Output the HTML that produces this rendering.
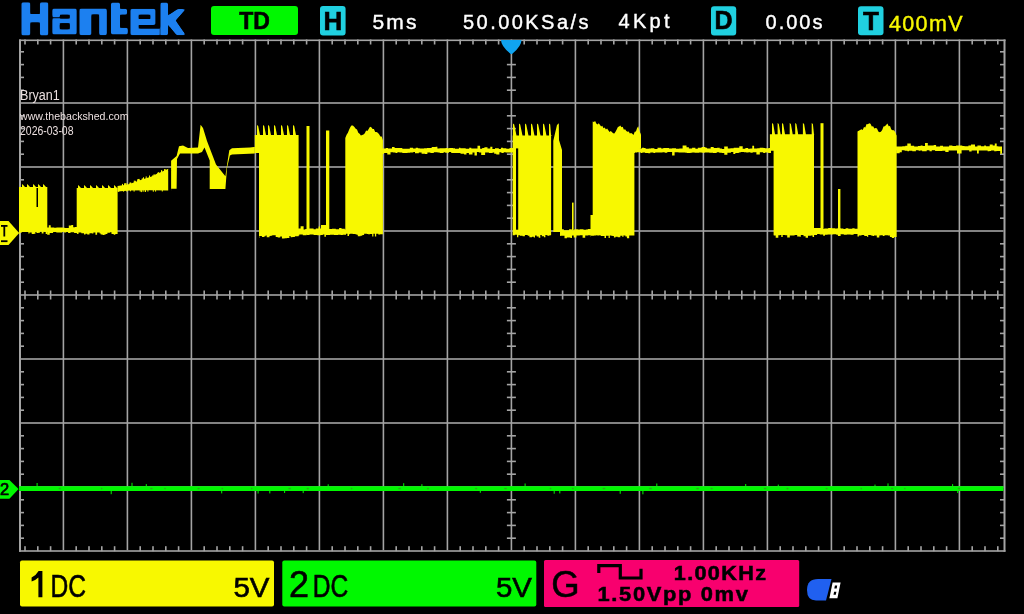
<!DOCTYPE html><html><head><meta charset="utf-8"><style>html,body{margin:0;padding:0;background:#000;width:1024px;height:614px;overflow:hidden}svg{display:block;filter:blur(0.4px)}text{font-family:"Liberation Sans",sans-serif}</style></head><body>
<svg width="1024" height="614" viewBox="0 0 1024 614">
<rect width="1024" height="614" fill="#000"/>
<defs><filter id="rnd" x="-5%" y="-20%" width="110%" height="140%"><feGaussianBlur in="SourceAlpha" stdDeviation="1.1"/><feComponentTransfer><feFuncA type="linear" slope="3" intercept="-1"/></feComponentTransfer><feComposite in="SourceGraphic" operator="in"/></filter></defs>
<g fill="#1e80f0" fill-rule="evenodd" filter="url(#rnd)">
<path d="M21.3,2.3H30.4V14.1H39.8V2.3H48.4V35.5H39.8V22.6H30.4V35.5H21.3Z"/>
<path d="M52.2,8.5H76.8V34.6H52.2V18.2H60V18.6H69.7V14.8H60V17.2H52.2Z M59.8,23.2H69.7V29.3H59.8Z"/>
<path d="M79.3,8.5H106.9V35.3H99.1V14.6H91.5V35.3H79.3Z"/>
<path d="M110.9,2.5H120.1V8.7H127.2V14.8H120.1V27.8H127.9V34.6H110.9Z"/>
<path d="M130.3,8.7H155.6V24.9H138.7V28.4H159.8V35.3H130.3Z M138.7,14.8H150.3V19H138.7Z"/>
<path d="M160.3,2.5H168.1V15.3L177.5,9H186L175.8,20.5L186,35.3H176.5L168.1,24.9V35.3H160.3Z"/>
</g>
<rect x="211" y="6" width="87" height="29" rx="3" fill="#00f800"/>
<text x="254.5" y="29" font-size="23" font-weight="bold" text-anchor="middle" fill="#000" stroke="#000" stroke-width="0.6">TD</text>
<rect x="320" y="6" width="25.6" height="29.6" rx="3" fill="#20d0e0"/>
<text x="332.8" y="30.1" font-size="26" font-weight="bold" text-anchor="middle" fill="#000" stroke="#000" stroke-width="0.6">H</text>
<rect x="711" y="6.2" width="25.2" height="29.3" rx="3" fill="#20d0e0"/>
<text x="723.6" y="29.4" font-size="25" font-weight="bold" text-anchor="middle" fill="#000" stroke="#000" stroke-width="0.6">D</text>
<rect x="858" y="6.2" width="25.5" height="29.1" rx="3" fill="#20d0e0"/>
<text x="871" y="30.1" font-size="26" font-weight="bold" text-anchor="middle" fill="#000" stroke="#000" stroke-width="0.6">T</text>
<text x="372.5" y="28.9" font-size="21" font-weight="normal" fill="#fff" textLength="44" lengthAdjust="spacing" stroke="#fff" stroke-width="0.4" >5ms</text>
<text x="463" y="28.9" font-size="20" font-weight="normal" fill="#fff" textLength="125.5" lengthAdjust="spacing" stroke="#fff" stroke-width="0.4" >50.00KSa/s</text>
<text x="618.5" y="27.5" font-size="20" font-weight="normal" fill="#fff" textLength="51" lengthAdjust="spacing" stroke="#fff" stroke-width="0.4" >4Kpt</text>
<text x="765.5" y="28.7" font-size="20" font-weight="normal" fill="#fff" textLength="57" lengthAdjust="spacing" stroke="#fff" stroke-width="0.4" >0.00s</text>
<text x="889" y="31.4" font-size="21.5" font-weight="normal" fill="#f8f800" textLength="73.5" lengthAdjust="spacing" stroke="#f8f800" stroke-width="0.4" >400mV</text>
<g fill="#a4a4a4"><rect x="62.6" y="39.5" width="1.6" height="510.7"/><rect x="126.6" y="39.5" width="1.6" height="510.7"/><rect x="190.6" y="39.5" width="1.6" height="510.7"/><rect x="254.6" y="39.5" width="1.6" height="510.7"/><rect x="318.6" y="39.5" width="1.6" height="510.7"/><rect x="382.6" y="39.5" width="1.6" height="510.7"/><rect x="446.6" y="39.5" width="1.6" height="510.7"/><rect x="510.6" y="39.5" width="1.6" height="510.7"/><rect x="574.6" y="39.5" width="1.6" height="510.7"/><rect x="638.6" y="39.5" width="1.6" height="510.7"/><rect x="702.6" y="39.5" width="1.6" height="510.7"/><rect x="766.6" y="39.5" width="1.6" height="510.7"/><rect x="830.6" y="39.5" width="1.6" height="510.7"/><rect x="894.6" y="39.5" width="1.6" height="510.7"/><rect x="958.6" y="39.5" width="1.6" height="510.7"/><rect x="19.0" y="102.2" width="984.5" height="1.6"/><rect x="19.0" y="166.2" width="984.5" height="1.6"/><rect x="19.0" y="230.2" width="984.5" height="1.6"/><rect x="19.0" y="294.2" width="984.5" height="1.6"/><rect x="19.0" y="358.2" width="984.5" height="1.6"/><rect x="19.0" y="422.2" width="984.5" height="1.6"/><rect x="19.0" y="486.2" width="984.5" height="1.6"/><rect x="19.0" y="39.5" width="2.0" height="512.2"/><rect x="1003.5" y="39.5" width="2.0" height="512.2"/><rect x="19.0" y="39.5" width="986.5" height="1.6"/><rect x="19.0" y="550.2" width="986.5" height="1.6"/><rect x="24.2" y="39.5" width="1.6" height="5.0"/><rect x="24.2" y="546.2" width="1.6" height="5.0"/><rect x="24.2" y="290.5" width="1.6" height="9.0"/><rect x="37.0" y="39.5" width="1.6" height="5.0"/><rect x="37.0" y="546.2" width="1.6" height="5.0"/><rect x="37.0" y="290.5" width="1.6" height="9.0"/><rect x="49.8" y="39.5" width="1.6" height="5.0"/><rect x="49.8" y="546.2" width="1.6" height="5.0"/><rect x="49.8" y="290.5" width="1.6" height="9.0"/><rect x="75.4" y="39.5" width="1.6" height="5.0"/><rect x="75.4" y="546.2" width="1.6" height="5.0"/><rect x="75.4" y="290.5" width="1.6" height="9.0"/><rect x="88.2" y="39.5" width="1.6" height="5.0"/><rect x="88.2" y="546.2" width="1.6" height="5.0"/><rect x="88.2" y="290.5" width="1.6" height="9.0"/><rect x="101.0" y="39.5" width="1.6" height="5.0"/><rect x="101.0" y="546.2" width="1.6" height="5.0"/><rect x="101.0" y="290.5" width="1.6" height="9.0"/><rect x="113.8" y="39.5" width="1.6" height="5.0"/><rect x="113.8" y="546.2" width="1.6" height="5.0"/><rect x="113.8" y="290.5" width="1.6" height="9.0"/><rect x="139.4" y="39.5" width="1.6" height="5.0"/><rect x="139.4" y="546.2" width="1.6" height="5.0"/><rect x="139.4" y="290.5" width="1.6" height="9.0"/><rect x="152.2" y="39.5" width="1.6" height="5.0"/><rect x="152.2" y="546.2" width="1.6" height="5.0"/><rect x="152.2" y="290.5" width="1.6" height="9.0"/><rect x="165.0" y="39.5" width="1.6" height="5.0"/><rect x="165.0" y="546.2" width="1.6" height="5.0"/><rect x="165.0" y="290.5" width="1.6" height="9.0"/><rect x="177.8" y="39.5" width="1.6" height="5.0"/><rect x="177.8" y="546.2" width="1.6" height="5.0"/><rect x="177.8" y="290.5" width="1.6" height="9.0"/><rect x="203.4" y="39.5" width="1.6" height="5.0"/><rect x="203.4" y="546.2" width="1.6" height="5.0"/><rect x="203.4" y="290.5" width="1.6" height="9.0"/><rect x="216.2" y="39.5" width="1.6" height="5.0"/><rect x="216.2" y="546.2" width="1.6" height="5.0"/><rect x="216.2" y="290.5" width="1.6" height="9.0"/><rect x="229.0" y="39.5" width="1.6" height="5.0"/><rect x="229.0" y="546.2" width="1.6" height="5.0"/><rect x="229.0" y="290.5" width="1.6" height="9.0"/><rect x="241.8" y="39.5" width="1.6" height="5.0"/><rect x="241.8" y="546.2" width="1.6" height="5.0"/><rect x="241.8" y="290.5" width="1.6" height="9.0"/><rect x="267.4" y="39.5" width="1.6" height="5.0"/><rect x="267.4" y="546.2" width="1.6" height="5.0"/><rect x="267.4" y="290.5" width="1.6" height="9.0"/><rect x="280.2" y="39.5" width="1.6" height="5.0"/><rect x="280.2" y="546.2" width="1.6" height="5.0"/><rect x="280.2" y="290.5" width="1.6" height="9.0"/><rect x="293.0" y="39.5" width="1.6" height="5.0"/><rect x="293.0" y="546.2" width="1.6" height="5.0"/><rect x="293.0" y="290.5" width="1.6" height="9.0"/><rect x="305.8" y="39.5" width="1.6" height="5.0"/><rect x="305.8" y="546.2" width="1.6" height="5.0"/><rect x="305.8" y="290.5" width="1.6" height="9.0"/><rect x="331.4" y="39.5" width="1.6" height="5.0"/><rect x="331.4" y="546.2" width="1.6" height="5.0"/><rect x="331.4" y="290.5" width="1.6" height="9.0"/><rect x="344.2" y="39.5" width="1.6" height="5.0"/><rect x="344.2" y="546.2" width="1.6" height="5.0"/><rect x="344.2" y="290.5" width="1.6" height="9.0"/><rect x="357.0" y="39.5" width="1.6" height="5.0"/><rect x="357.0" y="546.2" width="1.6" height="5.0"/><rect x="357.0" y="290.5" width="1.6" height="9.0"/><rect x="369.8" y="39.5" width="1.6" height="5.0"/><rect x="369.8" y="546.2" width="1.6" height="5.0"/><rect x="369.8" y="290.5" width="1.6" height="9.0"/><rect x="395.4" y="39.5" width="1.6" height="5.0"/><rect x="395.4" y="546.2" width="1.6" height="5.0"/><rect x="395.4" y="290.5" width="1.6" height="9.0"/><rect x="408.2" y="39.5" width="1.6" height="5.0"/><rect x="408.2" y="546.2" width="1.6" height="5.0"/><rect x="408.2" y="290.5" width="1.6" height="9.0"/><rect x="421.0" y="39.5" width="1.6" height="5.0"/><rect x="421.0" y="546.2" width="1.6" height="5.0"/><rect x="421.0" y="290.5" width="1.6" height="9.0"/><rect x="433.8" y="39.5" width="1.6" height="5.0"/><rect x="433.8" y="546.2" width="1.6" height="5.0"/><rect x="433.8" y="290.5" width="1.6" height="9.0"/><rect x="459.4" y="39.5" width="1.6" height="5.0"/><rect x="459.4" y="546.2" width="1.6" height="5.0"/><rect x="459.4" y="290.5" width="1.6" height="9.0"/><rect x="472.2" y="39.5" width="1.6" height="5.0"/><rect x="472.2" y="546.2" width="1.6" height="5.0"/><rect x="472.2" y="290.5" width="1.6" height="9.0"/><rect x="485.0" y="39.5" width="1.6" height="5.0"/><rect x="485.0" y="546.2" width="1.6" height="5.0"/><rect x="485.0" y="290.5" width="1.6" height="9.0"/><rect x="497.8" y="39.5" width="1.6" height="5.0"/><rect x="497.8" y="546.2" width="1.6" height="5.0"/><rect x="497.8" y="290.5" width="1.6" height="9.0"/><rect x="523.4" y="39.5" width="1.6" height="5.0"/><rect x="523.4" y="546.2" width="1.6" height="5.0"/><rect x="523.4" y="290.5" width="1.6" height="9.0"/><rect x="536.2" y="39.5" width="1.6" height="5.0"/><rect x="536.2" y="546.2" width="1.6" height="5.0"/><rect x="536.2" y="290.5" width="1.6" height="9.0"/><rect x="549.0" y="39.5" width="1.6" height="5.0"/><rect x="549.0" y="546.2" width="1.6" height="5.0"/><rect x="549.0" y="290.5" width="1.6" height="9.0"/><rect x="561.8" y="39.5" width="1.6" height="5.0"/><rect x="561.8" y="546.2" width="1.6" height="5.0"/><rect x="561.8" y="290.5" width="1.6" height="9.0"/><rect x="587.4" y="39.5" width="1.6" height="5.0"/><rect x="587.4" y="546.2" width="1.6" height="5.0"/><rect x="587.4" y="290.5" width="1.6" height="9.0"/><rect x="600.2" y="39.5" width="1.6" height="5.0"/><rect x="600.2" y="546.2" width="1.6" height="5.0"/><rect x="600.2" y="290.5" width="1.6" height="9.0"/><rect x="613.0" y="39.5" width="1.6" height="5.0"/><rect x="613.0" y="546.2" width="1.6" height="5.0"/><rect x="613.0" y="290.5" width="1.6" height="9.0"/><rect x="625.8" y="39.5" width="1.6" height="5.0"/><rect x="625.8" y="546.2" width="1.6" height="5.0"/><rect x="625.8" y="290.5" width="1.6" height="9.0"/><rect x="651.4" y="39.5" width="1.6" height="5.0"/><rect x="651.4" y="546.2" width="1.6" height="5.0"/><rect x="651.4" y="290.5" width="1.6" height="9.0"/><rect x="664.2" y="39.5" width="1.6" height="5.0"/><rect x="664.2" y="546.2" width="1.6" height="5.0"/><rect x="664.2" y="290.5" width="1.6" height="9.0"/><rect x="677.0" y="39.5" width="1.6" height="5.0"/><rect x="677.0" y="546.2" width="1.6" height="5.0"/><rect x="677.0" y="290.5" width="1.6" height="9.0"/><rect x="689.8" y="39.5" width="1.6" height="5.0"/><rect x="689.8" y="546.2" width="1.6" height="5.0"/><rect x="689.8" y="290.5" width="1.6" height="9.0"/><rect x="715.4" y="39.5" width="1.6" height="5.0"/><rect x="715.4" y="546.2" width="1.6" height="5.0"/><rect x="715.4" y="290.5" width="1.6" height="9.0"/><rect x="728.2" y="39.5" width="1.6" height="5.0"/><rect x="728.2" y="546.2" width="1.6" height="5.0"/><rect x="728.2" y="290.5" width="1.6" height="9.0"/><rect x="741.0" y="39.5" width="1.6" height="5.0"/><rect x="741.0" y="546.2" width="1.6" height="5.0"/><rect x="741.0" y="290.5" width="1.6" height="9.0"/><rect x="753.8" y="39.5" width="1.6" height="5.0"/><rect x="753.8" y="546.2" width="1.6" height="5.0"/><rect x="753.8" y="290.5" width="1.6" height="9.0"/><rect x="779.4" y="39.5" width="1.6" height="5.0"/><rect x="779.4" y="546.2" width="1.6" height="5.0"/><rect x="779.4" y="290.5" width="1.6" height="9.0"/><rect x="792.2" y="39.5" width="1.6" height="5.0"/><rect x="792.2" y="546.2" width="1.6" height="5.0"/><rect x="792.2" y="290.5" width="1.6" height="9.0"/><rect x="805.0" y="39.5" width="1.6" height="5.0"/><rect x="805.0" y="546.2" width="1.6" height="5.0"/><rect x="805.0" y="290.5" width="1.6" height="9.0"/><rect x="817.8" y="39.5" width="1.6" height="5.0"/><rect x="817.8" y="546.2" width="1.6" height="5.0"/><rect x="817.8" y="290.5" width="1.6" height="9.0"/><rect x="843.4" y="39.5" width="1.6" height="5.0"/><rect x="843.4" y="546.2" width="1.6" height="5.0"/><rect x="843.4" y="290.5" width="1.6" height="9.0"/><rect x="856.2" y="39.5" width="1.6" height="5.0"/><rect x="856.2" y="546.2" width="1.6" height="5.0"/><rect x="856.2" y="290.5" width="1.6" height="9.0"/><rect x="869.0" y="39.5" width="1.6" height="5.0"/><rect x="869.0" y="546.2" width="1.6" height="5.0"/><rect x="869.0" y="290.5" width="1.6" height="9.0"/><rect x="881.8" y="39.5" width="1.6" height="5.0"/><rect x="881.8" y="546.2" width="1.6" height="5.0"/><rect x="881.8" y="290.5" width="1.6" height="9.0"/><rect x="907.4" y="39.5" width="1.6" height="5.0"/><rect x="907.4" y="546.2" width="1.6" height="5.0"/><rect x="907.4" y="290.5" width="1.6" height="9.0"/><rect x="920.2" y="39.5" width="1.6" height="5.0"/><rect x="920.2" y="546.2" width="1.6" height="5.0"/><rect x="920.2" y="290.5" width="1.6" height="9.0"/><rect x="933.0" y="39.5" width="1.6" height="5.0"/><rect x="933.0" y="546.2" width="1.6" height="5.0"/><rect x="933.0" y="290.5" width="1.6" height="9.0"/><rect x="945.8" y="39.5" width="1.6" height="5.0"/><rect x="945.8" y="546.2" width="1.6" height="5.0"/><rect x="945.8" y="290.5" width="1.6" height="9.0"/><rect x="971.4" y="39.5" width="1.6" height="5.0"/><rect x="971.4" y="546.2" width="1.6" height="5.0"/><rect x="971.4" y="290.5" width="1.6" height="9.0"/><rect x="984.2" y="39.5" width="1.6" height="5.0"/><rect x="984.2" y="546.2" width="1.6" height="5.0"/><rect x="984.2" y="290.5" width="1.6" height="9.0"/><rect x="997.0" y="39.5" width="1.6" height="5.0"/><rect x="997.0" y="546.2" width="1.6" height="5.0"/><rect x="997.0" y="290.5" width="1.6" height="9.0"/><rect x="19.0" y="51.0" width="5.0" height="1.6"/><rect x="1000.0" y="51.0" width="5.0" height="1.6"/><rect x="19.0" y="63.8" width="5.0" height="1.6"/><rect x="1000.0" y="63.8" width="5.0" height="1.6"/><rect x="506.9" y="63.8" width="9.0" height="1.6"/><rect x="19.0" y="76.6" width="5.0" height="1.6"/><rect x="1000.0" y="76.6" width="5.0" height="1.6"/><rect x="506.9" y="76.6" width="9.0" height="1.6"/><rect x="19.0" y="89.4" width="5.0" height="1.6"/><rect x="1000.0" y="89.4" width="5.0" height="1.6"/><rect x="506.9" y="89.4" width="9.0" height="1.6"/><rect x="19.0" y="115.0" width="5.0" height="1.6"/><rect x="1000.0" y="115.0" width="5.0" height="1.6"/><rect x="506.9" y="115.0" width="9.0" height="1.6"/><rect x="19.0" y="127.8" width="5.0" height="1.6"/><rect x="1000.0" y="127.8" width="5.0" height="1.6"/><rect x="506.9" y="127.8" width="9.0" height="1.6"/><rect x="19.0" y="140.6" width="5.0" height="1.6"/><rect x="1000.0" y="140.6" width="5.0" height="1.6"/><rect x="506.9" y="140.6" width="9.0" height="1.6"/><rect x="19.0" y="153.4" width="5.0" height="1.6"/><rect x="1000.0" y="153.4" width="5.0" height="1.6"/><rect x="506.9" y="153.4" width="9.0" height="1.6"/><rect x="19.0" y="179.0" width="5.0" height="1.6"/><rect x="1000.0" y="179.0" width="5.0" height="1.6"/><rect x="506.9" y="179.0" width="9.0" height="1.6"/><rect x="19.0" y="191.8" width="5.0" height="1.6"/><rect x="1000.0" y="191.8" width="5.0" height="1.6"/><rect x="506.9" y="191.8" width="9.0" height="1.6"/><rect x="19.0" y="204.6" width="5.0" height="1.6"/><rect x="1000.0" y="204.6" width="5.0" height="1.6"/><rect x="506.9" y="204.6" width="9.0" height="1.6"/><rect x="19.0" y="217.4" width="5.0" height="1.6"/><rect x="1000.0" y="217.4" width="5.0" height="1.6"/><rect x="506.9" y="217.4" width="9.0" height="1.6"/><rect x="19.0" y="243.0" width="5.0" height="1.6"/><rect x="1000.0" y="243.0" width="5.0" height="1.6"/><rect x="506.9" y="243.0" width="9.0" height="1.6"/><rect x="19.0" y="255.8" width="5.0" height="1.6"/><rect x="1000.0" y="255.8" width="5.0" height="1.6"/><rect x="506.9" y="255.8" width="9.0" height="1.6"/><rect x="19.0" y="268.6" width="5.0" height="1.6"/><rect x="1000.0" y="268.6" width="5.0" height="1.6"/><rect x="506.9" y="268.6" width="9.0" height="1.6"/><rect x="19.0" y="281.4" width="5.0" height="1.6"/><rect x="1000.0" y="281.4" width="5.0" height="1.6"/><rect x="506.9" y="281.4" width="9.0" height="1.6"/><rect x="19.0" y="307.0" width="5.0" height="1.6"/><rect x="1000.0" y="307.0" width="5.0" height="1.6"/><rect x="506.9" y="307.0" width="9.0" height="1.6"/><rect x="19.0" y="319.8" width="5.0" height="1.6"/><rect x="1000.0" y="319.8" width="5.0" height="1.6"/><rect x="506.9" y="319.8" width="9.0" height="1.6"/><rect x="19.0" y="332.6" width="5.0" height="1.6"/><rect x="1000.0" y="332.6" width="5.0" height="1.6"/><rect x="506.9" y="332.6" width="9.0" height="1.6"/><rect x="19.0" y="345.4" width="5.0" height="1.6"/><rect x="1000.0" y="345.4" width="5.0" height="1.6"/><rect x="506.9" y="345.4" width="9.0" height="1.6"/><rect x="19.0" y="371.0" width="5.0" height="1.6"/><rect x="1000.0" y="371.0" width="5.0" height="1.6"/><rect x="506.9" y="371.0" width="9.0" height="1.6"/><rect x="19.0" y="383.8" width="5.0" height="1.6"/><rect x="1000.0" y="383.8" width="5.0" height="1.6"/><rect x="506.9" y="383.8" width="9.0" height="1.6"/><rect x="19.0" y="396.6" width="5.0" height="1.6"/><rect x="1000.0" y="396.6" width="5.0" height="1.6"/><rect x="506.9" y="396.6" width="9.0" height="1.6"/><rect x="19.0" y="409.4" width="5.0" height="1.6"/><rect x="1000.0" y="409.4" width="5.0" height="1.6"/><rect x="506.9" y="409.4" width="9.0" height="1.6"/><rect x="19.0" y="435.0" width="5.0" height="1.6"/><rect x="1000.0" y="435.0" width="5.0" height="1.6"/><rect x="506.9" y="435.0" width="9.0" height="1.6"/><rect x="19.0" y="447.8" width="5.0" height="1.6"/><rect x="1000.0" y="447.8" width="5.0" height="1.6"/><rect x="506.9" y="447.8" width="9.0" height="1.6"/><rect x="19.0" y="460.6" width="5.0" height="1.6"/><rect x="1000.0" y="460.6" width="5.0" height="1.6"/><rect x="506.9" y="460.6" width="9.0" height="1.6"/><rect x="19.0" y="473.4" width="5.0" height="1.6"/><rect x="1000.0" y="473.4" width="5.0" height="1.6"/><rect x="506.9" y="473.4" width="9.0" height="1.6"/><rect x="19.0" y="499.0" width="5.0" height="1.6"/><rect x="1000.0" y="499.0" width="5.0" height="1.6"/><rect x="506.9" y="499.0" width="9.0" height="1.6"/><rect x="19.0" y="511.8" width="5.0" height="1.6"/><rect x="1000.0" y="511.8" width="5.0" height="1.6"/><rect x="506.9" y="511.8" width="9.0" height="1.6"/><rect x="19.0" y="524.6" width="5.0" height="1.6"/><rect x="1000.0" y="524.6" width="5.0" height="1.6"/><rect x="506.9" y="524.6" width="9.0" height="1.6"/><rect x="19.0" y="537.4" width="5.0" height="1.6"/><rect x="1000.0" y="537.4" width="5.0" height="1.6"/><rect x="506.9" y="537.4" width="9.0" height="1.6"/></g>
<text x="20" y="99.9" font-size="13.8" fill="#ece0e0" textLength="39.8" lengthAdjust="spacingAndGlyphs">Bryan1</text>
<text x="20" y="119.6" font-size="11" fill="#ece0e0" textLength="108.5" lengthAdjust="spacingAndGlyphs">www.thebackshed.com</text>
<text x="20" y="134.8" font-size="12" fill="#ece0e0" textLength="53.5" lengthAdjust="spacingAndGlyphs">2026-03-08</text>
<g fill="#f8f800"><polygon points="19.0,187.0 22.0,187.0 22.0,184.0 23.2,185.0 25.0,187.0 27.0,187.0 27.0,184.0 28.2,185.0 30.0,187.0 33.0,187.0 33.0,184.0 34.2,185.0 36.0,187.0 38.0,187.0 38.0,184.0 39.2,185.0 41.0,187.0 43.0,187.0 43.0,184.0 44.2,185.0 46.0,187.0 47.3,187.0 47.3,187.0 47.3,232.0 47.3,234.1 45.7,234.1 45.7,232.1 44.6,232.1 44.6,231.7 43.5,231.7 43.5,233.4 41.7,233.4 41.7,231.8 39.9,231.8 39.9,232.8 38.5,232.8 38.5,232.9 36.5,232.9 36.5,232.0 35.4,232.0 35.4,233.7 34.2,233.7 34.2,234.0 31.7,234.0 31.7,232.4 29.5,232.4 29.5,233.5 28.4,233.5 28.4,232.1 26.2,232.1 26.2,232.1 24.1,232.1 24.1,232.0 21.7,232.0 21.7,232.8 19.7,232.8 19.7,234.5 19.0,234.5"/><rect x="36.5" y="188" width="1.5" height="19" fill="#000"/><polygon points="47.0,227.4 48.8,227.4 48.8,225.2 50.7,225.2 50.7,227.6 54.1,227.6 54.1,227.7 56.4,227.7 56.4,227.4 59.3,227.4 59.3,227.5 63.2,227.5 63.2,227.7 64.8,227.7 64.8,227.9 68.8,227.9 68.8,225.6 71.3,225.6 71.3,225.0 73.2,225.0 73.2,227.2 75.0,227.2 75.0,227.0 77.0,227.0 77.0,233.0 74.1,233.0 74.1,232.2 70.5,232.2 70.5,233.0 68.1,233.0 68.1,232.1 66.2,232.1 66.2,232.5 64.1,232.5 64.1,231.9 62.0,231.9 62.0,232.6 59.5,232.6 59.5,232.5 56.3,232.5 56.3,232.0 53.1,232.0 53.1,232.9 49.7,232.9 49.7,234.8 47.2,234.8 47.2,232.0 47.0,232.0"/><polygon points="76.7,188.0 78.0,188.0 78.0,185.0 79.2,186.0 81.0,188.0 84.0,188.0 84.0,185.0 85.2,186.0 87.0,188.0 90.0,188.0 90.0,185.0 91.2,186.0 93.0,188.0 96.0,188.0 96.0,185.0 97.2,186.0 99.0,188.0 102.0,188.0 102.0,185.0 103.2,186.0 105.0,188.0 108.0,188.0 108.0,185.0 109.2,186.0 111.0,188.0 114.0,188.0 114.0,185.0 115.2,186.0 117.0,188.0 117.6,188.0 117.6,188.0 117.6,233.0 117.6,233.9 116.3,233.9 116.3,233.9 115.3,233.9 115.3,234.8 113.7,234.8 113.7,234.1 111.5,234.1 111.5,232.3 109.9,232.3 109.9,232.8 107.4,232.8 107.4,233.9 105.5,233.9 105.5,234.8 103.9,234.8 103.9,234.9 102.6,234.9 102.6,234.5 100.7,234.5 100.7,233.4 99.6,233.4 99.6,232.5 97.1,232.5 97.1,234.7 95.4,234.7 95.4,232.6 93.4,232.6 93.4,233.4 92.0,233.4 92.0,233.2 89.5,233.2 89.5,234.4 87.2,234.4 87.2,233.8 85.5,233.8 85.5,234.6 84.0,234.6 84.0,233.3 81.3,233.3 81.3,232.6 78.5,232.6 78.5,234.0 77.1,234.0 77.1,233.3 76.7,233.3"/><polygon points="117.5,186.0 127.7,184.6 135.2,181.9 142.0,179.5 151.6,176.4 156.4,174.0 161.2,172.0 166.7,169.6 168.2,168.8 168.2,171.0 171.1,171.0 171.1,160.8 176.6,156.0 179.0,146.3 183.0,145.5 188.0,148.0 198.0,147.5 200.6,124.8 203.0,128.0 207.0,141.0 216.0,164.5 225.4,176.2 227.0,165.0 229.3,150.2 232.0,148.2 250.0,147.5 254.0,147.0 254.8,147.0 254.8,153.5 232.0,154.5 229.9,155.4 227.0,168.0 225.4,189.0 209.7,189.0 209.7,160.6 204.5,147.6 202.0,152.0 198.0,153.5 180.0,153.5 177.0,158.9 176.6,188.7 171.1,188.7 171.1,190.5 167.4,190.5 150.0,190.3 130.0,190.6 117.5,191.4"/><rect x="157.9" y="172.1" width="1" height="5"/><rect x="149.0" y="175.5" width="1" height="5"/><rect x="122.0" y="183.9" width="1" height="5"/><rect x="161.2" y="170.3" width="1" height="5"/><rect x="153.6" y="174.2" width="1" height="5"/><rect x="126.5" y="183.1" width="1" height="5"/><rect x="133.8" y="180.7" width="1" height="5"/><rect x="164.2" y="169.6" width="1" height="5"/><rect x="137.1" y="179.3" width="1" height="5"/><rect x="152.4" y="175.2" width="1" height="5"/><rect x="124.0" y="184.4" width="1" height="5"/><rect x="161.0" y="170.4" width="1" height="5"/><rect x="124.9" y="183.2" width="1" height="5"/><rect x="164.6" y="169.0" width="1" height="5"/><rect x="134.6" y="180.8" width="1" height="5"/><rect x="124.2" y="184.6" width="1" height="5"/><rect x="164.1" y="169.3" width="1" height="5"/><rect x="143.0" y="177.3" width="1" height="5"/><rect x="138.6" y="178.9" width="1" height="5"/><rect x="157.2" y="172.8" width="1" height="5"/><rect x="130.0" y="182.8" width="1" height="5"/><rect x="129.4" y="182.6" width="1" height="5"/><rect x="130.3" y="182.5" width="1" height="5"/><rect x="124.2" y="183.2" width="1" height="5"/><rect x="134.8" y="180.9" width="1" height="5"/><rect x="145.7" y="176.4" width="1" height="5"/><rect x="138.0" y="179.0" width="1" height="5"/><rect x="141.8" y="178.3" width="1" height="5"/><rect x="142.9" y="178.7" width="1" height="5"/><rect x="138.9" y="179.8" width="1" height="5"/><rect x="118.2" y="189" width="1" height="3.0"/><rect x="126.3" y="189" width="1" height="2.6"/><rect x="152.8" y="189" width="1" height="2.7"/><rect x="133.6" y="189" width="1" height="2.6"/><rect x="144.7" y="189" width="1" height="2.9"/><rect x="123.1" y="189" width="1" height="2.7"/><rect x="129.9" y="189" width="1" height="2.3"/><rect x="155.1" y="189" width="1" height="2.6"/><rect x="145.0" y="189" width="1" height="2.9"/><rect x="161.8" y="189" width="1" height="2.5"/><rect x="147.4" y="189" width="1" height="2.6"/><rect x="142.6" y="189" width="1" height="2.8"/><rect x="139.7" y="189" width="1" height="2.6"/><rect x="140.9" y="189" width="1" height="3.1"/><rect x="168.2" y="170.4" width="2.9" height="22" fill="#000"/><polygon points="254.8,135.0 254.8,135.0 257.0,135.0 257.0,125.0 258.2,126.0 260.0,135.0 263.0,135.0 263.0,125.0 264.2,126.0 266.0,135.0 268.0,135.0 268.0,125.0 269.2,126.0 271.0,135.0 274.0,135.0 274.0,125.0 275.2,126.0 277.0,135.0 281.0,135.0 281.0,125.0 282.2,126.0 284.0,135.0 287.0,135.0 287.0,125.0 288.2,126.0 290.0,135.0 293.0,135.0 293.0,125.0 294.2,126.0 296.0,135.0 298.6,135.0 298.6,135.0 298.6,235.5 298.6,236.3 296.3,236.3 296.3,236.3 294.9,236.3 294.9,237.0 292.4,237.0 292.4,237.2 290.6,237.2 290.6,236.1 289.4,236.1 289.4,238.0 286.8,238.0 286.8,238.3 284.6,238.3 284.6,238.4 281.9,238.4 281.9,236.4 280.2,236.4 280.2,237.5 277.7,237.5 277.7,237.1 275.7,237.1 275.7,235.2 274.2,235.2 274.2,235.2 272.2,235.2 272.2,235.8 270.6,235.8 270.6,236.1 269.5,236.1 269.5,237.3 266.7,237.3 266.7,235.5 265.6,235.5 265.6,236.3 264.4,236.3 264.4,237.1 261.9,237.1 261.9,236.0 259.3,236.0 259.3,238.0 259.0,238.0 259.0,236.0 259.0,153.0 254.8,153.0"/><polygon points="298.0,228.5 300.6,228.5 300.6,226.3 303.6,226.3 303.6,229.4 305.3,229.4 305.3,229.1 307.7,229.1 307.7,228.6 309.8,228.6 309.8,228.5 311.9,228.5 311.9,228.6 313.6,228.6 313.6,229.3 315.8,229.3 315.8,228.6 318.6,228.6 318.6,226.5 320.1,226.5 320.1,228.6 323.0,228.6 323.0,228.5 326.8,228.5 326.8,229.0 329.4,229.0 329.4,229.0 331.9,229.0 331.9,228.8 335.8,228.8 335.8,229.2 339.1,229.2 339.1,227.9 341.5,227.9 341.5,228.7 344.8,228.7 344.8,229.4 346.0,229.4 346.0,234.7 342.8,234.7 342.8,235.0 340.6,235.0 340.6,234.7 338.0,234.7 338.0,235.1 334.0,235.1 334.0,234.8 330.1,234.8 330.1,234.9 328.6,234.9 328.6,234.6 325.9,234.6 325.9,236.8 324.4,236.8 324.4,234.4 322.8,234.4 322.8,235.1 320.7,235.1 320.7,235.2 317.3,235.2 317.3,234.9 313.6,234.9 313.6,234.6 309.6,234.6 309.6,234.5 306.5,234.5 306.5,235.2 302.8,235.2 302.8,234.6 299.3,234.6 299.3,235.4 298.0,235.4"/><rect x="306.5" y="126" width="3" height="109"/><rect x="326" y="130.5" width="3.3" height="104.5"/><rect x="321" y="225" width="6" height="5"/><polygon points="345.3,138.1 346.6,134.7 347.9,132.8 349.2,129.5 350.5,126.8 351.8,125.2 353.1,125.8 354.4,127.1 355.7,128.7 357.0,129.5 358.3,132.8 359.6,133.7 360.9,135.4 362.2,135.0 363.5,134.5 364.8,133.3 366.1,130.6 367.4,130.9 368.7,129.1 370.0,126.8 371.3,127.3 372.6,129.0 373.9,129.0 375.2,132.0 376.5,132.0 377.8,132.7 379.1,134.3 380.4,136.6 381.7,136.4 383.0,140.8 382.9,140.0 382.9,234.5 382.9,234.2 380.1,234.2 380.1,234.6 378.3,234.6 378.3,233.8 376.2,233.8 376.2,236.6 374.9,236.6 374.9,233.7 373.4,233.7 373.4,236.4 372.2,236.4 372.2,234.0 370.0,234.0 370.0,234.3 368.1,234.3 368.1,233.9 366.9,233.9 366.9,233.7 364.1,233.7 364.1,234.9 362.3,234.9 362.3,235.7 360.5,235.7 360.5,236.3 357.8,236.3 357.8,234.8 356.5,234.8 356.5,234.3 355.3,234.3 355.3,234.0 352.7,234.0 352.7,233.7 350.1,233.7 350.1,234.2 349.0,234.2 349.0,235.9 347.5,235.9 347.5,233.7 345.9,233.7 345.9,233.8 345.3,233.8"/><polygon points="382.0,148.6 385.8,148.6 385.8,148.1 388.0,148.1 388.0,148.4 392.0,148.4 392.0,147.1 394.6,147.1 394.6,148.0 398.2,148.0 398.2,148.0 400.3,148.0 400.3,148.1 402.3,148.1 402.3,148.7 406.0,148.7 406.0,148.8 409.8,148.8 409.8,147.8 413.1,147.8 413.1,148.6 415.7,148.6 415.7,147.8 417.9,147.8 417.9,148.3 419.7,148.3 419.7,148.6 422.0,148.6 422.0,148.5 424.1,148.5 424.1,148.2 427.0,148.2 427.0,147.9 428.9,147.9 428.9,148.0 431.7,148.0 431.7,146.9 435.7,146.9 435.7,146.8 437.4,146.8 437.4,148.4 439.5,148.4 439.5,148.2 442.9,148.2 442.9,148.2 445.7,148.2 445.7,148.0 447.4,148.0 447.4,148.3 449.2,148.3 449.2,148.0 452.9,148.0 452.9,148.2 455.0,148.2 455.0,148.7 458.9,148.7 458.9,147.7 460.4,147.7 460.4,148.3 464.2,148.3 464.2,148.2 465.7,148.2 465.7,148.7 469.2,148.7 469.2,147.8 471.3,147.8 471.3,148.5 474.1,148.5 474.1,148.5 477.5,148.5 477.5,145.7 480.1,145.7 480.1,148.8 482.2,148.8 482.2,147.9 484.4,147.9 484.4,147.2 487.5,147.2 487.5,148.4 490.3,148.4 490.3,146.7 492.4,146.7 492.4,148.9 495.0,148.9 495.0,148.3 498.8,148.3 498.8,148.9 500.9,148.9 500.9,147.7 503.1,147.7 503.1,148.2 506.3,148.2 506.3,148.8 509.5,148.8 509.5,148.1 511.1,148.1 511.1,147.9 513.0,147.9 513.0,152.6 509.7,152.6 509.7,152.4 505.7,152.4 505.7,152.3 503.7,152.3 503.7,153.1 501.4,153.1 501.4,152.3 499.4,152.3 499.4,154.4 496.3,154.4 496.3,153.7 494.2,153.7 494.2,152.5 492.6,152.5 492.6,152.9 488.9,152.9 488.9,152.4 485.1,152.4 485.1,154.9 481.2,154.9 481.2,152.4 478.8,152.4 478.8,152.0 476.9,152.0 476.9,155.5 474.5,155.5 474.5,152.4 472.5,152.4 472.5,154.5 468.9,154.5 468.9,153.1 466.5,153.1 466.5,154.4 464.1,154.4 464.1,153.7 460.5,153.7 460.5,153.1 458.9,153.1 458.9,153.1 455.5,153.1 455.5,153.1 453.3,153.1 453.3,152.9 451.2,152.9 451.2,152.0 449.0,152.0 449.0,152.8 445.2,152.8 445.2,152.3 443.6,152.3 443.6,153.1 439.7,153.1 439.7,152.5 437.6,152.5 437.6,152.2 433.8,152.2 433.8,153.0 430.4,153.0 430.4,152.4 427.4,152.4 427.4,154.0 425.0,154.0 425.0,153.7 421.6,153.7 421.6,152.4 418.8,152.4 418.8,153.2 415.0,153.2 415.0,152.1 413.3,152.1 413.3,152.5 410.1,152.5 410.1,152.7 407.5,152.7 407.5,153.0 404.1,153.0 404.1,153.0 402.3,153.0 402.3,152.4 399.4,152.4 399.4,152.3 397.4,152.3 397.4,153.1 395.5,153.1 395.5,152.5 393.2,152.5 393.2,152.3 390.5,152.3 390.5,154.5 387.3,154.5 387.3,153.0 383.8,153.0 383.8,154.0 382.2,154.0 382.2,152.7 382.0,152.7"/><polygon points="512.7,135.5 513.0,135.5 513.0,123.5 514.2,124.5 516.5,135.5 519.0,135.5 519.0,123.5 520.2,124.5 522.5,135.5 525.0,135.5 525.0,123.5 526.2,124.5 528.5,135.5 531.0,135.5 531.0,123.5 532.2,124.5 534.5,135.5 537.0,135.5 537.0,123.5 538.2,124.5 540.5,135.5 543.0,135.5 543.0,123.5 544.2,124.5 546.5,135.5 549.0,135.5 549.0,123.5 550.2,124.5 551.1,135.5 552.5,135.5 551.1,136.0 551.1,235.0 551.1,235.2 549.4,235.2 549.4,235.8 548.0,235.8 548.0,235.4 546.8,235.4 546.8,234.9 545.4,234.9 545.4,237.3 544.0,237.3 544.0,236.3 541.8,236.3 541.8,234.9 540.3,234.9 540.3,237.7 538.7,237.7 538.7,236.5 536.7,236.5 536.7,235.5 535.0,235.5 535.0,237.5 533.8,237.5 533.8,236.8 532.1,236.8 532.1,237.3 529.4,237.3 529.4,235.7 527.7,235.7 527.7,234.9 524.9,234.9 524.9,236.3 522.6,236.3 522.6,235.7 520.0,235.7 520.0,235.3 518.3,235.3 518.3,237.2 517.0,237.2 517.0,234.8 514.8,234.8 514.8,235.3 512.7,235.3 512.7,237.2 512.7,237.2"/><rect x="516" y="148.4" width="2.2" height="81.3" fill="#000"/><polygon points="553.3,140.7 557.0,125.0 558.8,123.2 559.0,140.0 562.0,150.0 562.0,232.0 553.3,232.0"/><polygon points="560.0,229.2 563.8,229.2 563.8,230.3 567.3,230.3 567.3,230.2 569.1,230.2 569.1,229.2 571.8,229.2 571.8,230.2 574.3,230.2 574.3,229.3 577.9,229.3 577.9,229.6 579.9,229.6 579.9,229.3 583.5,229.3 583.5,229.7 586.0,229.7 586.0,229.4 587.8,229.4 587.8,229.1 591.6,229.1 591.6,229.1 593.0,229.1 593.0,235.6 591.2,235.6 591.2,235.3 588.1,235.3 588.1,235.4 585.2,235.4 585.2,237.7 582.6,237.7 582.6,235.2 579.8,235.2 579.8,235.4 576.4,235.4 576.4,237.4 573.7,237.4 573.7,235.4 572.0,235.4 572.0,238.0 570.4,238.0 570.4,237.5 566.9,237.5 566.9,238.2 564.5,238.2 564.5,235.8 560.5,235.8 560.5,236.1 560.0,236.1"/><rect x="572" y="202.6" width="1.6" height="28"/><polygon points="590.5,235.0 590.5,215.0 592.7,215.0 592.7,121.4 593.9,122.1 595.1,121.1 596.3,123.5 597.5,124.6 598.7,123.2 599.9,124.7 601.1,126.4 602.3,125.7 603.5,128.3 604.7,127.4 605.9,129.5 607.1,128.6 608.3,130.2 609.5,132.0 610.7,131.0 611.9,131.9 613.1,133.2 614.3,133.5 615.5,131.7 616.7,129.6 617.9,127.1 619.1,126.6 620.3,125.4 621.5,127.3 622.7,126.8 623.9,129.7 625.1,129.3 626.3,130.9 627.5,131.7 628.7,131.5 629.9,133.4 631.1,133.1 632.3,133.7 633.5,135.0 634.7,131.8 635.9,131.4 637.1,127.9 638.3,126.3 639.5,131.2 640.7,133.7 641.0,135.0 641.0,148.4 634.4,150.0 634.4,235.5 634.4,235.6 631.6,235.6 631.6,235.4 629.2,235.4 629.2,238.2 626.9,238.2 626.9,236.4 625.4,236.4 625.4,235.6 623.4,235.6 623.4,237.1 622.4,237.1 622.4,235.8 620.3,235.8 620.3,237.2 617.7,237.2 617.7,236.8 615.5,236.8 615.5,237.4 613.9,237.4 613.9,235.9 612.4,235.9 612.4,235.8 611.1,235.8 611.1,235.5 609.8,235.5 609.8,237.9 608.6,237.9 608.6,235.7 606.0,235.7 606.0,237.9 604.5,237.9 604.5,236.0 602.5,236.0 602.5,236.1 600.7,236.1 600.7,235.3 599.3,235.3 599.3,235.5 597.3,235.5 597.3,235.2 596.2,235.2 596.2,235.4 594.2,235.4 594.2,235.8 592.9,235.8 592.9,235.4 590.7,235.4 590.7,236.9 590.5,236.9"/><polygon points="634.0,148.6 637.7,148.6 637.7,148.7 639.2,148.7 639.2,148.6 641.9,148.6 641.9,147.8 644.0,147.8 644.0,148.1 645.6,148.1 645.6,148.7 648.8,148.7 648.8,148.4 651.0,148.4 651.0,148.3 654.4,148.3 654.4,148.9 657.5,148.9 657.5,147.7 661.2,147.7 661.2,148.6 663.3,148.6 663.3,148.1 666.7,148.1 666.7,148.0 669.0,148.0 669.0,148.5 672.1,148.5 672.1,148.3 676.0,148.3 676.0,148.7 679.3,148.7 679.3,148.4 682.6,148.4 682.6,145.5 684.6,145.5 684.6,145.4 686.5,145.4 686.5,147.2 688.9,147.2 688.9,148.5 692.1,148.5 692.1,147.8 695.4,147.8 695.4,148.7 697.8,148.7 697.8,147.8 701.6,147.8 701.6,146.9 705.4,146.9 705.4,147.7 707.1,147.7 707.1,148.5 710.7,148.5 710.7,147.1 713.7,147.1 713.7,147.9 717.1,147.9 717.1,147.7 719.7,147.7 719.7,148.6 721.9,148.6 721.9,148.9 724.2,148.9 724.2,146.5 727.8,146.5 727.8,148.6 730.4,148.6 730.4,148.3 733.7,148.3 733.7,147.8 737.3,147.8 737.3,147.7 739.3,147.7 739.3,146.3 742.7,146.3 742.7,148.7 745.4,148.7 745.4,148.1 748.1,148.1 748.1,148.8 750.3,148.8 750.3,148.5 752.3,148.5 752.3,145.7 754.1,145.7 754.1,148.6 757.3,148.6 757.3,148.2 759.7,148.2 759.7,147.8 763.5,147.8 763.5,147.9 765.0,147.9 765.0,148.3 768.8,148.3 768.8,148.0 771.0,148.0 771.0,152.9 768.2,152.9 768.2,152.4 765.1,152.4 765.1,153.0 763.2,153.0 763.2,152.2 759.8,152.2 759.8,154.5 756.4,154.5 756.4,152.3 752.7,152.3 752.7,152.8 750.4,152.8 750.4,152.2 748.5,152.2 748.5,152.6 746.2,152.6 746.2,152.2 743.9,152.2 743.9,152.1 740.6,152.1 740.6,152.5 738.8,152.5 738.8,152.9 735.3,152.9 735.3,154.0 733.3,154.0 733.3,152.0 730.9,152.0 730.9,152.8 727.4,152.8 727.4,154.8 724.3,154.8 724.3,152.9 721.8,152.9 721.8,152.7 719.2,152.7 719.2,152.3 716.7,152.3 716.7,152.9 713.0,152.9 713.0,152.8 709.3,152.8 709.3,152.4 706.7,152.4 706.7,152.5 705.0,152.5 705.0,152.8 701.7,152.8 701.7,152.5 699.1,152.5 699.1,152.8 696.6,152.8 696.6,152.8 694.6,152.8 694.6,152.6 692.2,152.6 692.2,152.7 690.6,152.7 690.6,153.1 687.1,153.1 687.1,152.7 685.4,152.7 685.4,152.6 682.1,152.6 682.1,152.6 678.5,152.6 678.5,152.3 674.6,152.3 674.6,155.6 672.1,155.6 672.1,152.1 669.8,152.1 669.8,152.0 667.3,152.0 667.3,152.8 664.7,152.8 664.7,152.3 662.5,152.3 662.5,152.6 658.7,152.6 658.7,152.5 655.2,152.5 655.2,152.9 653.4,152.9 653.4,152.6 650.3,152.6 650.3,153.2 648.2,153.2 648.2,153.0 645.1,153.0 645.1,152.4 642.4,152.4 642.4,153.0 640.6,153.0 640.6,152.3 637.0,152.3 637.0,152.5 634.9,152.5 634.9,152.9 634.0,152.9"/><polygon points="769.9,134.2 772.0,134.2 772.0,123.0 773.2,124.0 775.0,134.2 777.6,134.2 777.6,123.0 778.8,124.0 780.6,134.2 782.0,134.2 782.0,123.0 783.2,124.0 785.0,134.2 789.7,134.2 789.7,123.0 790.9,124.0 792.7,134.2 795.2,134.2 795.2,123.0 796.4,124.0 798.2,134.2 802.9,134.2 802.9,123.0 804.1,124.0 805.9,134.2 811.7,134.2 811.7,123.0 812.9,124.0 814.0,134.2 814.7,134.2 814.0,134.0 814.0,235.0 814.0,237.1 812.6,237.1 812.6,235.5 810.8,235.5 810.8,235.7 809.1,235.7 809.1,235.8 808.0,235.8 808.0,237.7 805.6,237.7 805.6,236.3 803.5,236.3 803.5,235.0 800.8,235.0 800.8,236.7 799.6,236.7 799.6,236.6 797.2,236.6 797.2,234.9 794.6,234.9 794.6,235.6 792.0,235.6 792.0,235.6 789.8,235.6 789.8,237.5 787.2,237.5 787.2,235.2 785.3,235.2 785.3,235.0 782.7,235.0 782.7,237.1 781.3,237.1 781.3,234.9 780.2,234.9 780.2,235.3 778.3,235.3 778.3,237.7 775.7,237.7 775.7,235.5 773.9,235.5 773.9,235.2 773.6,235.2 773.6,235.5 773.6,150.7 769.9,150.7"/><rect x="820.5" y="123.2" width="3" height="107"/><polygon points="814.0,228.0 817.9,228.0 817.9,227.9 821.0,227.9 821.0,229.0 824.2,229.0 824.2,228.5 828.2,228.5 828.2,227.9 831.9,227.9 831.9,228.3 835.0,228.3 835.0,228.5 837.4,228.5 837.4,228.2 840.8,228.2 840.8,228.6 843.4,228.6 843.4,228.9 845.6,228.9 845.6,228.2 848.3,228.2 848.3,228.7 852.3,228.7 852.3,228.3 854.6,228.3 854.6,228.7 857.6,228.7 857.6,228.8 858.0,228.8 858.0,234.0 855.1,234.0 855.1,234.1 853.6,234.1 853.6,234.7 850.6,234.7 850.6,234.6 846.8,234.6 846.8,234.7 843.8,234.7 843.8,234.2 840.6,234.2 840.6,235.9 837.9,235.9 837.9,234.8 836.3,234.8 836.3,234.3 833.2,234.3 833.2,234.6 829.7,234.6 829.7,234.4 827.5,234.4 827.5,234.7 824.9,234.7 824.9,235.7 823.2,235.7 823.2,234.6 819.7,234.6 819.7,233.9 817.1,233.9 817.1,235.0 814.1,235.0 814.1,236.8 814.0,236.8"/><rect x="838" y="189" width="2.4" height="40"/><polygon points="857.5,131.5 858.8,130.8 860.1,129.9 861.4,129.3 862.7,129.9 864.0,127.0 865.3,127.6 866.6,123.9 867.9,124.3 869.2,123.2 870.5,123.8 871.8,126.5 873.1,126.2 874.4,128.4 875.7,128.0 877.0,128.6 878.3,131.4 879.6,132.3 880.9,131.8 882.2,129.9 883.5,126.6 884.8,126.3 886.1,124.9 887.4,123.6 888.7,126.3 890.0,126.1 891.3,129.4 892.6,130.3 893.9,130.3 895.2,132.1 896.5,135.5 896.6,135.0 896.6,235.6 896.6,236.9 894.1,236.9 894.1,237.9 891.8,237.9 891.8,237.0 889.9,237.0 889.9,235.6 887.9,235.6 887.9,235.2 886.6,235.2 886.6,235.3 884.5,235.3 884.5,235.9 882.8,235.9 882.8,235.2 880.4,235.2 880.4,235.6 879.3,235.6 879.3,237.4 876.8,237.4 876.8,235.5 874.0,235.5 874.0,235.9 872.5,235.9 872.5,235.5 870.8,235.5 870.8,235.1 868.2,235.1 868.2,237.1 867.2,237.1 867.2,235.9 865.1,235.9 865.1,235.8 864.0,235.8 864.0,235.1 861.5,235.1 861.5,235.6 858.9,235.6 858.9,236.5 857.5,236.5"/><polygon points="896.0,146.4 898.9,146.4 898.9,146.5 902.3,146.5 902.3,146.2 905.3,146.2 905.3,145.7 907.3,145.7 907.3,143.4 910.8,143.4 910.8,145.7 914.2,145.7 914.2,146.5 917.9,146.5 917.9,146.1 920.6,146.1 920.6,145.6 922.6,145.6 922.6,146.1 925.0,146.1 925.0,143.0 927.8,143.0 927.8,145.5 930.3,145.5 930.3,145.6 933.7,145.6 933.7,144.9 936.1,144.9 936.1,146.4 940.1,146.4 940.1,145.7 943.0,145.7 943.0,146.5 945.5,146.5 945.5,146.6 949.1,146.6 949.1,145.6 950.7,145.6 950.7,145.5 952.4,145.5 952.4,145.9 956.1,145.9 956.1,145.5 959.8,145.5 959.8,145.5 962.3,145.5 962.3,146.1 964.5,146.1 964.5,146.2 968.4,146.2 968.4,145.6 971.0,145.6 971.0,144.5 975.0,144.5 975.0,146.5 977.4,146.5 977.4,145.5 980.9,145.5 980.9,146.2 984.2,146.2 984.2,145.6 985.9,145.6 985.9,146.2 989.7,146.2 989.7,144.4 992.7,144.4 992.7,145.5 994.8,145.5 994.8,143.6 996.7,143.6 996.7,146.3 998.3,146.3 998.3,146.5 999.9,146.5 999.9,146.4 1002.0,146.4 1002.0,153.7 1000.2,153.7 1000.2,151.0 996.5,151.0 996.5,151.2 994.2,151.2 994.2,150.4 991.1,150.4 991.1,151.1 989.5,151.1 989.5,151.2 987.6,151.2 987.6,150.4 985.1,150.4 985.1,150.6 981.5,150.6 981.5,150.6 978.8,150.6 978.8,153.6 977.0,153.6 977.0,150.5 973.8,150.5 973.8,150.5 971.6,150.5 971.6,151.4 969.2,151.4 969.2,150.3 965.4,150.3 965.4,150.3 961.6,150.3 961.6,153.4 959.4,153.4 959.4,153.5 957.0,153.5 957.0,150.4 954.2,150.4 954.2,150.5 950.4,150.5 950.4,150.4 948.6,150.4 948.6,152.0 945.3,152.0 945.3,150.8 942.3,150.8 942.3,150.9 940.3,150.9 940.3,150.9 936.8,150.9 936.8,151.1 935.1,151.1 935.1,150.3 931.8,150.3 931.8,151.2 929.5,151.2 929.5,150.2 926.7,150.2 926.7,151.2 924.0,151.2 924.0,151.2 922.1,151.2 922.1,150.6 920.2,150.6 920.2,150.8 918.6,150.8 918.6,150.3 915.9,150.3 915.9,151.2 912.3,151.2 912.3,150.7 909.0,150.7 909.0,151.2 907.4,151.2 907.4,150.8 904.6,150.8 904.6,150.2 901.8,150.2 901.8,152.3 899.7,152.3 899.7,153.2 896.2,153.2 896.2,150.2 896.0,150.2"/></g>
<rect x="19" y="486.2" width="984.5" height="4.8" fill="#00f800"/>
<g fill="#30a020"><rect x="58.8" y="487.9" width="1.9" height="1.3"/><rect x="101.0" y="487.9" width="1.3" height="1.3"/><rect x="150.4" y="487.9" width="2.1" height="1.3"/><rect x="164.3" y="487.9" width="1.4" height="1.3"/><rect x="197.6" y="487.9" width="1.9" height="1.3"/><rect x="221.6" y="487.9" width="1.4" height="1.3"/><rect x="251.0" y="487.9" width="1.4" height="1.3"/><rect x="288.5" y="487.9" width="2.3" height="1.3"/><rect x="306.8" y="487.9" width="1.9" height="1.3"/><rect x="350.9" y="487.9" width="1.4" height="1.3"/><rect x="398.4" y="487.9" width="2.4" height="1.3"/><rect x="427.1" y="487.9" width="1.7" height="1.3"/><rect x="475.2" y="487.9" width="1.9" height="1.3"/><rect x="504.3" y="487.9" width="2.4" height="1.3"/><rect x="549.7" y="487.9" width="1.6" height="1.3"/><rect x="572.0" y="487.9" width="1.6" height="1.3"/><rect x="602.7" y="487.9" width="2.5" height="1.3"/><rect x="649.3" y="487.9" width="2.4" height="1.3"/><rect x="696.4" y="487.9" width="2.3" height="1.3"/><rect x="710.7" y="487.9" width="1.9" height="1.3"/><rect x="763.9" y="487.9" width="2.4" height="1.3"/><rect x="786.6" y="487.9" width="1.7" height="1.3"/><rect x="825.8" y="487.9" width="1.7" height="1.3"/><rect x="860.6" y="487.9" width="1.3" height="1.3"/><rect x="891.2" y="487.9" width="1.9" height="1.3"/><rect x="904.1" y="487.9" width="1.4" height="1.3"/><rect x="957.8" y="487.9" width="2.2" height="1.3"/></g>
<g fill="#00f800"><rect x="642.4" y="491.0" width="1" height="3.3"/><rect x="887.5" y="483.4" width="1" height="2.8"/><rect x="284.1" y="491.0" width="1" height="2.0"/><rect x="553.7" y="491.0" width="1" height="2.7"/><rect x="269.3" y="491.0" width="1" height="2.4"/><rect x="952.1" y="484.1" width="1" height="2.1"/><rect x="656.3" y="483.5" width="1" height="2.7"/><rect x="957.2" y="491.0" width="1" height="2.0"/><rect x="479.8" y="491.0" width="1" height="1.8"/><rect x="145.8" y="484.1" width="1" height="2.1"/><rect x="421.4" y="484.2" width="1" height="2.0"/><rect x="110.7" y="491.0" width="1" height="3.2"/><rect x="619.7" y="491.0" width="1" height="2.8"/><rect x="221.2" y="491.0" width="1" height="2.4"/><rect x="559.3" y="491.0" width="1" height="2.4"/><rect x="327.7" y="484.3" width="1" height="1.9"/><rect x="524.6" y="483.5" width="1" height="2.7"/><rect x="36.6" y="483.0" width="1" height="3.2"/><rect x="257.6" y="491.0" width="1" height="2.5"/><rect x="302.7" y="491.0" width="1" height="2.1"/><rect x="777.8" y="484.6" width="1" height="1.6"/><rect x="874.5" y="484.6" width="1" height="1.6"/><rect x="403.2" y="483.2" width="1" height="3.0"/><rect x="131.5" y="482.8" width="1" height="3.4"/><rect x="745.2" y="484.0" width="1" height="2.2"/></g>
<path d="M501,40 H521.5 Q521.5,46 512.6,53.6 Q511.4,54.6 510.2,53.6 Q501,46 501,40Z" fill="#10a4f0"/>
<path d="M0,221 L8.5,221 L19.2,233 L8.5,245 L0,245z" fill="#f8f800"/>
<rect x="1" y="225" width="6.5" height="1.8" fill="#000"/><rect x="3.4" y="225" width="1.8" height="11.5" fill="#000"/><rect x="1" y="240.3" width="6.5" height="1.8" fill="#000"/>
<path d="M0,480 L9.4,480 L18.6,489 L9.4,498.8 L0,498.8z" fill="#00f800"/>
<text x="4.6" y="495.3" font-size="16.5" fill="#000" stroke="#000" stroke-width="0.7" text-anchor="middle">2</text>
<rect x="20" y="560.5" width="254" height="46" rx="2" fill="#f8f800"/>
<path d="M38.6,570.9 H42.4 V597.2 H38.4 V577.6 Q35.6,580.4 31.6,581.6 V577.6 Q35.8,575.6 38.6,570.9Z" fill="#000"/>
<text x="50.5" y="597" font-size="31" fill="#000" stroke="#000" stroke-width="0.6" textLength="35.5" lengthAdjust="spacingAndGlyphs">DC</text>
<text x="233.5" y="596.5" font-size="27" fill="#000" stroke="#000" stroke-width="0.6" textLength="36" lengthAdjust="spacingAndGlyphs">5V</text>
<rect x="282.3" y="560.5" width="254" height="46" rx="2" fill="#00f800"/>
<text x="289" y="597" font-size="36" fill="#000" stroke="#000" stroke-width="0.6">2</text>
<text x="312.8" y="597" font-size="31" fill="#000" stroke="#000" stroke-width="0.6" textLength="35.5" lengthAdjust="spacingAndGlyphs">DC</text>
<text x="496" y="596.5" font-size="27" fill="#000" stroke="#000" stroke-width="0.6" textLength="36" lengthAdjust="spacingAndGlyphs">5V</text>
<rect x="544" y="560" width="255.2" height="47" rx="1.5" fill="#f8006e"/>
<text x="551.3" y="597.3" font-size="36.5" fill="#000" stroke="#000" stroke-width="0.5">G</text>
<path d="M598.8,573 V565.6 H620.3 V578 H641 V568.7" fill="none" stroke="#000" stroke-width="3.2"/>
<text x="673.8" y="580.3" font-size="19.5" font-weight="bold" fill="#000" stroke="#000" stroke-width="0.5" letter-spacing="1.2" textLength="93.5" lengthAdjust="spacingAndGlyphs">1.00KHz</text>
<text x="597.5" y="600.8" font-size="20" font-weight="bold" fill="#000" stroke="#000" stroke-width="0.5" letter-spacing="1.5" textLength="152" lengthAdjust="spacingAndGlyphs">1.50Vpp 0mv</text>
<path d="M818,579 H831.5 L826,600.4 H816 Q807,600.4 807,590 Q807,579 818,579z" fill="#2060f0"/>
<path d="M832.6,582.4 H840.6 L837.4,598.2 H829.4z" fill="#fff"/>
<path d="M834.9,585.6 H837.2 L836.7,588.6 H834.3z M834.1,591.8 H836.4 L835.8,594.8 H833.5z" fill="#000"/>
</svg></body></html>
